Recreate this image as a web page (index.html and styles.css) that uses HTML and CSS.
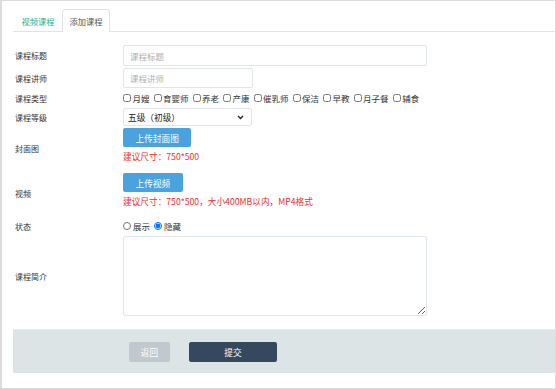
FILE: index.html
```html
<!DOCTYPE html>
<html lang="zh">
<head>
    <meta charset="UTF-8">
    <title>添加课程</title>
    <link rel="stylesheet" href="styles.css">
</head>
<body>
    <div class="wrap">
        <div class="tabs">
            <a class="tab">视频课程</a>
            <a class="tab active">添加课程</a>
        </div>

        <div class="form">
            <div class="row">
                <label class="label">课程标题</label>
                <input class="input wide" type="text" placeholder="课程标题">
            </div>
            <div class="row">
                <label class="label">课程讲师</label>
                <input class="input short" type="text" placeholder="课程讲师">
            </div>
            <div class="row row-check">
                <label class="label">课程类型</label>
                <div class="checks">
                    <label><input type="checkbox">月嫂</label>
                    <label><input type="checkbox">育婴师</label>
                    <label><input type="checkbox">养老</label>
                    <label><input type="checkbox">产康</label>
                    <label><input type="checkbox">催乳师</label>
                    <label><input type="checkbox">保洁</label>
                    <label><input type="checkbox">早教</label>
                    <label><input type="checkbox">月子餐</label>
                    <label><input type="checkbox">辅食</label>
                </div>
            </div>
            <div class="row">
                <label class="label">课程等级</label>
                <div class="select-box">
                    <select class="select">
                        <option>五级（初级）</option>
                        <option>四级（中级）</option>
                        <option>三级（高级）</option>
                    </select>
                    <svg class="arrow" width="7" height="5" viewBox="0 0 7 5"><path d="M1 1l2.5 2.5L6 1" fill="none" stroke="#222" stroke-width="1.3"/></svg>
                </div>
            </div>
            <div class="row row-upload">
                <label class="label">封面图</label>
                <div class="upload">
                    <button class="btn-upload">上传封面图</button>
                    <div class="tip">建议尺寸：750*500</div>
                </div>
            </div>
            <div class="row row-upload row-video">
                <label class="label">视频</label>
                <div class="upload">
                    <button class="btn-upload">上传视频</button>
                    <div class="tip">建议尺寸：750*500，大小400MB以内，MP4格式</div>
                </div>
            </div>
            <div class="row row-radio">
                <label class="label">状态</label>
                <div class="radios">
                    <label><input type="radio" name="status">展示</label>
                    <label><input type="radio" name="status" checked>隐藏</label>
                </div>
            </div>
            <div class="row">
                <label class="label">课程简介</label>
                <textarea class="textarea"></textarea>
            </div>
        </div>

        <div class="footer">
            <button class="btn-back">返回</button>
            <button class="btn-submit">提交</button>
        </div>
    </div>
</body>
</html>
```

FILE: styles.css
```css
body {
    margin: 0;
    font-family: "Noto Sans CJK SC", "Noto Sans", sans-serif;
    color: #333;
    background-color: #fff;
}
.wrap {
    box-sizing: border-box;
    width: 556px;
    height: 389px;
    border: 1px solid #dcdcdc;
    border-left: 2px solid #dcdcdc;
    padding-left: 11px;
}
.tabs {
    display: flex;
    padding-top: 8px;
    padding-left: 1px;
    border-bottom: 1px solid #e3e3e3;
}
.tab {
    display: block;
    height: 21px;
    line-height: 22px;
    padding: 0 6.5px;
    font-size: 8.25px;
    color: #1ab394;
    border: 1px solid transparent;
    border-bottom: none;
    border-radius: 3px 3px 0 0;
    margin-bottom: -1px;
}
.tab.active {
    color: #555;
    background-color: #fff;
    border-color: #e3e3e3;
    height: 22px;
}
.form {
    padding: 13px 0 0 2px;
}
.row {
    display: flex;
    align-items: center;
    margin-bottom: 2px;
}
.label {
    width: 108px;
    flex-shrink: 0;
    font-size: 8px;
    color: #333;
}
.input {
    box-sizing: border-box;
    height: 21px;
    border: 1px solid #dfe5ec;
    border-radius: 2px;
    padding: 0 6px;
    font-size: 8.5px;
    font-family: inherit;
    outline: none;
}
.input::placeholder {
    color: #b0b0b0;
}
.wide {
    width: 304px;
}
.short {
    width: 130px;
    height: 20px;
}
.row-check {
    margin: 4px 0 4px;
}
.checks, .radios {
    display: flex;
    font-size: 8.5px;
    color: #333;
}
.checks label, .radios label {
    display: flex;
    align-items: center;
    margin-right: 4px;
}
.checks input {
    width: 8px;
    height: 8px;
    margin: 0 1.5px 0 0;
}
.radios input {
    width: 8px;
    height: 8px;
    margin: 0 2px 0 0;
}
.select-box {
    position: relative;
    display: flex;
}
.select {
    box-sizing: border-box;
    width: 129px;
    height: 18px;
    border: 1px solid #dfe5ec;
    border-radius: 2px;
    padding: 0 4px;
    font-size: 8.67px;
    font-family: inherit;
    color: #222;
    background-color: #fff;
    outline: none;
    appearance: none;
}
.arrow {
    position: absolute;
    right: 8px;
    top: 7px;
}
.row-upload {
    margin-top: 2px;
    padding-bottom: 9px;
}
.row-upload .label {
    padding-top: 7px;
}
.row-video {
    margin-top: 2px;
    padding-bottom: 11px;
}
.upload {
    display: flex;
    flex-direction: column;
    align-items: flex-start;
}
.btn-upload {
    height: 19px;
    padding: 0 12.5px;
    border: none;
    border-radius: 2px;
    background-color: #4aa3df;
    color: #fff;
    font-size: 8.67px;
    font-family: inherit;
}
.tip {
    margin-top: 3px;
    font-size: 8.67px;
    color: #f23030;
    line-height: 12px;
}
.row-radio {
    margin-top: 1px;
    margin-bottom: 4px;
}
.textarea {
    box-sizing: border-box;
    width: 304px;
    height: 80px;
    border: 1px solid #dfe5ec;
    border-radius: 2px;
    outline: none;
    font-family: inherit;
}
.footer {
    margin-top: 13px;
    height: 43px;
    background-color: #dde4e6;
    border-top: 1px solid #e6ebec;
    display: flex;
    align-items: center;
    padding-left: 116px;
    gap: 19px;
}
.btn-back, .btn-submit {
    height: 20px;
    border: none;
    border-radius: 2px;
    color: #fff;
    font-size: 8.67px;
    font-family: inherit;
}
.btn-back {
    width: 41px;
    background-color: #c1c8ce;
}
.btn-submit {
    width: 88px;
    background-color: #34495e;
}
```
